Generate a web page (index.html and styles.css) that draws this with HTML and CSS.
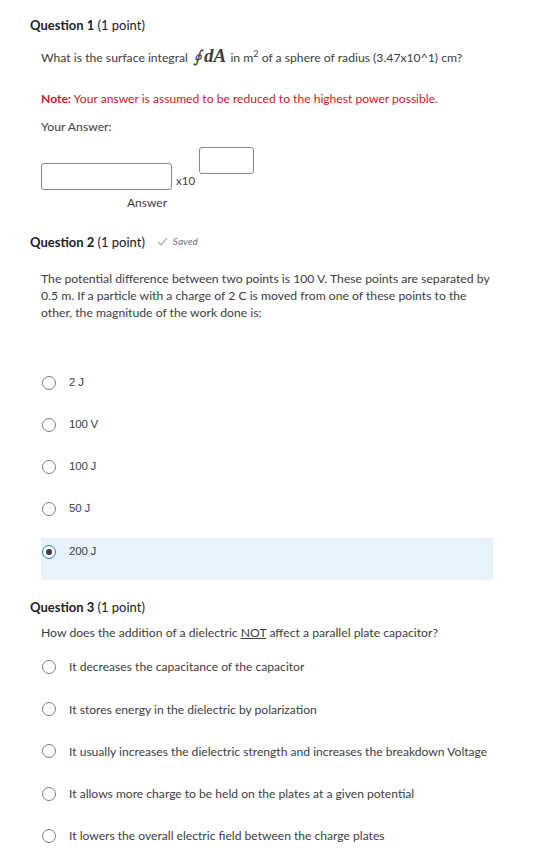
FILE: index.html
```html
<!DOCTYPE html>
<html>
<head>
  <meta charset="utf-8">
  <title>Quiz</title>
  <link rel="stylesheet" href="styles.css">
</head>
<body>
  <div class="quiz">

    <div class="question">
      <h2 class="q-title">Question 1 <span class="points">(1 point)</span></h2>
      <div class="q-body">
        <p class="q-text">What is the surface integral <span class="math"><span class="oint">&#8750;</span><i>dA</i></span> in m<sup>2</sup> of a sphere of radius (3.47x10^1) cm?</p>
        <p class="note"><strong>Note:</strong> Your answer is assumed to be reduced to the highest power possible.</p>
        <p class="your-answer">Your Answer:</p>
        <div class="sci-answer">
          <div class="sci-main">
            <input type="text" class="answer-box">
            <span class="sci-label">Answer</span>
          </div>
          <span class="times">x10</span>
          <input type="text" class="exp-box">
        </div>
      </div>
    </div>

    <div class="question q2">
      <h2 class="q-title">Question 2 <span class="points">(1 point)</span><span class="saved"><svg width="11" height="9" viewBox="0 0 11 9"><path d="M1 5 L4 8 L10 1" fill="none" stroke="#b5b5b5" stroke-width="1.3"/></svg><em>Saved</em></span></h2>
      <div class="q-body">
        <p class="q-text para">The potential difference between two points is 100 V. These points are separated by 0.5 m. If a particle with a charge of 2 C is moved from one of these points to the other, the magnitude of the work done is:</p>
        <ul class="choices small">
          <li class="choice"><span class="radio"></span><span>2 J</span></li>
          <li class="choice"><span class="radio"></span><span>100 V</span></li>
          <li class="choice"><span class="radio"></span><span>100 J</span></li>
          <li class="choice"><span class="radio"></span><span>50 J</span></li>
          <li class="choice selected"><span class="radio checked"></span><span>200 J</span></li>
        </ul>
      </div>
    </div>

    <div class="question q3">
      <h2 class="q-title">Question 3 <span class="points">(1 point)</span></h2>
      <div class="q-body">
        <p class="q-text">How does the addition of a dielectric <u>NOT</u> affect a parallel plate capacitor?</p>
        <ul class="choices">
          <li class="choice"><span class="radio"></span><span>It decreases the capacitance of the capacitor</span></li>
          <li class="choice"><span class="radio"></span><span>It stores energy in the dielectric by polarization</span></li>
          <li class="choice"><span class="radio"></span><span>It usually increases the dielectric strength and increases the breakdown Voltage</span></li>
          <li class="choice"><span class="radio"></span><span>It allows more charge to be held on the plates at a given potential</span></li>
          <li class="choice"><span class="radio"></span><span>It lowers the overall electric field between the charge plates</span></li>
        </ul>
      </div>
    </div>

  </div>
</body>
</html>
```

FILE: styles.css
```css
body {
  margin: 0;
  font-family: Lato, 'Open Sans', sans-serif;
  color: #3c3d3f;
  background: white;
}

.quiz {
  padding: 17px 30px 0 30px;
}

.q-title {
  font-size: 13px;
  font-weight: 700;
  color: #202122;
  margin: 0;
  line-height: 16px;
}

.q-title .points {
  font-weight: 400;
}

.q-body {
  padding-left: 11px;
}

.q-text {
  font-size: 12.2px;
  line-height: 17px;
  margin: 0;
}

.question:first-child .q-text {
  margin-top: 16px;
}

.math {
  font-family: 'Liberation Serif', serif;
  font-size: 19px;
  font-weight: 700;
  margin: 0 1px 0 2px;
  line-height: 0;
}

.math .oint {
  font-style: italic;
  font-weight: 400;
  font-size: 17px;
  margin-right: 2px;
}

sup {
  font-size: 9px;
  line-height: 0;
}

.note {
  color: #cd2026;
  font-size: 12.1px;
  margin: 24px 0 0 0;
  line-height: 17px;
}

.note strong {
  font-weight: 700;
}

.your-answer {
  font-size: 12.2px;
  margin: 11px 0 0 0;
  line-height: 17px;
}

.sci-answer {
  display: flex;
  align-items: flex-start;
  margin-top: 12px;
}

.sci-main {
  display: flex;
  flex-direction: column;
  align-items: flex-start;
  margin-top: 16px;
}

input[type="text"] {
  border: 1px solid #888;
  border-radius: 3px;
  box-sizing: border-box;
  background: white;
  margin: 0;
}

.answer-box {
  width: 131px;
  height: 27px;
}

.exp-box {
  width: 55px;
  height: 27px;
  margin-left: 4px !important;
}

.sci-label {
  font-size: 12px;
  margin-top: 5px;
  margin-left: 86px;
}

.times {
  font-size: 11.5px;
  margin-top: 27px;
  margin-left: 4px;
}

.q2 {
  margin-top: 23px;
}

.saved {
  display: inline-flex;
  align-items: center;
  margin-left: 12px;
  font-size: 10px;
  font-weight: 400;
  color: #6e7376;
  vertical-align: 1px;
}

.saved svg {
  margin-right: 5px;
}

.q2 .para {
  margin-top: 20px;
  width: 452px;
}

.choices {
  list-style: none;
  margin: 0;
  padding: 0;
}

.q2 .choices {
  margin-top: 48px;
  width: 452px;
}

.choice {
  display: flex;
  align-items: center;
  height: 42.25px;
  font-size: 12.1px;
}

.choices.small .choice {
  font-family: 'Liberation Sans', Arial, sans-serif;
  font-size: 11.5px;
  letter-spacing: -0.2px;
  align-items: flex-start;
  padding-top: 7px;
  box-sizing: border-box;
}

.choice.selected {
  background: #e8f2fb;
}

.radio {
  width: 14px;
  height: 14px;
  border: 1px solid #7d7d7d;
  border-radius: 50%;
  box-sizing: border-box;
  margin-left: 1px;
  margin-right: 13px;
  flex-shrink: 0;
  display: flex;
  align-items: center;
  justify-content: center;
  background: white;
}

.radio.checked {
  border: 1.5px solid #1a73c9;
}

.radio.checked::after {
  content: "";
  width: 6px;
  height: 6px;
  border-radius: 50%;
  background: #3a3a3a;
}

.q3 {
  margin-top: 19px;
}

.q3 .q-text {
  margin-top: 9px;
}

.q3 .choices {
  margin-top: 5px;
}
```
